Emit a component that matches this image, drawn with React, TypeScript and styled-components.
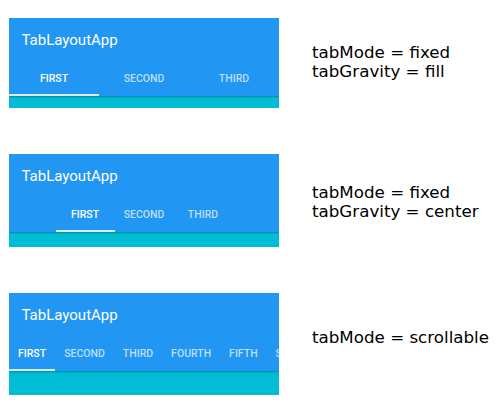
import React from "react";
import styled, { createGlobalStyle } from "styled-components";

const Global = createGlobalStyle`
  html, body { margin: 0; padding: 0; background: #ffffff; }
  body { width: 499px; height: 418px; overflow: hidden; }
`;

const Page = styled.div`
  display: flex;
  flex-direction: column;
  gap: 46px;
  padding: 18px 0 0 9px;
`;

const Row = styled.div`
  display: flex;
  align-items: flex-start;
`;

const Phone = styled.div`
  width: 270px;
  display: flex;
  flex-direction: column;
  overflow: hidden;
`;

const AppBar = styled.div`
  background: #2196f3;
  display: flex;
  flex-direction: column;
  position: relative;
  z-index: 1;
  box-shadow: 0 1px 1.5px rgba(0, 0, 0, 0.28);
`;

const Title = styled.div`
  height: 44px;
  padding: 0 0 0 12.5px;
  display: flex;
  align-items: center;
  font-family: Roboto, "Liberation Sans", sans-serif;
  font-size: 15px;
  font-weight: 400;
  color: #ffffff;
  box-sizing: border-box;
`;

const Tabs = styled.div<{ $mode: "fill" | "center" | "scroll" }>`
  height: 34px;
  display: flex;
  justify-content: ${(p) => (p.$mode === "center" ? "center" : "flex-start")};
  white-space: nowrap;
`;

const Tab = styled.div<{ $mode: "fill" | "center" | "scroll"; $active?: boolean }>`
  flex: ${(p) => (p.$mode === "fill" ? "1 1 0" : "0 0 auto")};
  width: ${(p) => (p.$mode === "center" ? "59px" : "auto")};
  padding: ${(p) => (p.$mode === "scroll" ? "0 9px" : "0")};
  display: flex;
  align-items: center;
  justify-content: center;
  box-sizing: border-box;
  font-family: Roboto, "Liberation Sans", sans-serif;
  font-size: 10.5px;
  font-weight: 500;
  letter-spacing: 0;
  color: ${(p) => (p.$active ? "#ffffff" : "rgba(255,255,255,0.7)")};
  border-bottom: 2px solid ${(p) => (p.$active ? "#dfe9f0" : "transparent")};
`;

const Content = styled.div<{ $h: number }>`
  height: ${(p) => p.$h}px;
  background: #00bcd4;
`;

const Label = styled.div<{ $top: number }>`
  margin-left: 33px;
  padding-top: ${(p) => p.$top}px;
  font-family: "DejaVu Sans", sans-serif;
  font-size: 16.7px;
  line-height: 18.5px;
  color: #000000;
`;

type Mode = "fill" | "center" | "scroll";

function Sample({ mode, tabs, h }: { mode: Mode; tabs: string[]; h: number }) {
  return (
    <Phone>
      <AppBar>
        <Title>TabLayoutApp</Title>
        <Tabs $mode={mode}>
          {tabs.map((t, i) => (
            <Tab key={t} $mode={mode} $active={i === 0}>
              {t}
            </Tab>
          ))}
        </Tabs>
      </AppBar>
      <Content $h={h} />
    </Phone>
  );
}

export default function App() {
  return (
    <>
      <Global />
      <Page>
        <Row>
          <Sample mode="fill" tabs={["FIRST", "SECOND", "THIRD"]} h={12} />
          <Label $top={25}>
            tabMode = fixed
            <br />
            tabGravity = fill
          </Label>
        </Row>
        <Row>
          <Sample mode="center" tabs={["FIRST", "SECOND", "THIRD"]} h={15} />
          <Label $top={29}>
            tabMode = fixed
            <br />
            tabGravity = center
          </Label>
        </Row>
        <Row>
          <Sample
            mode="scroll"
            tabs={["FIRST", "SECOND", "THIRD", "FOURTH", "FIFTH", "SIXTH"]}
            h={24}
          />
          <Label $top={35}>tabMode = scrollable</Label>
        </Row>
      </Page>
    </>
  );
}
